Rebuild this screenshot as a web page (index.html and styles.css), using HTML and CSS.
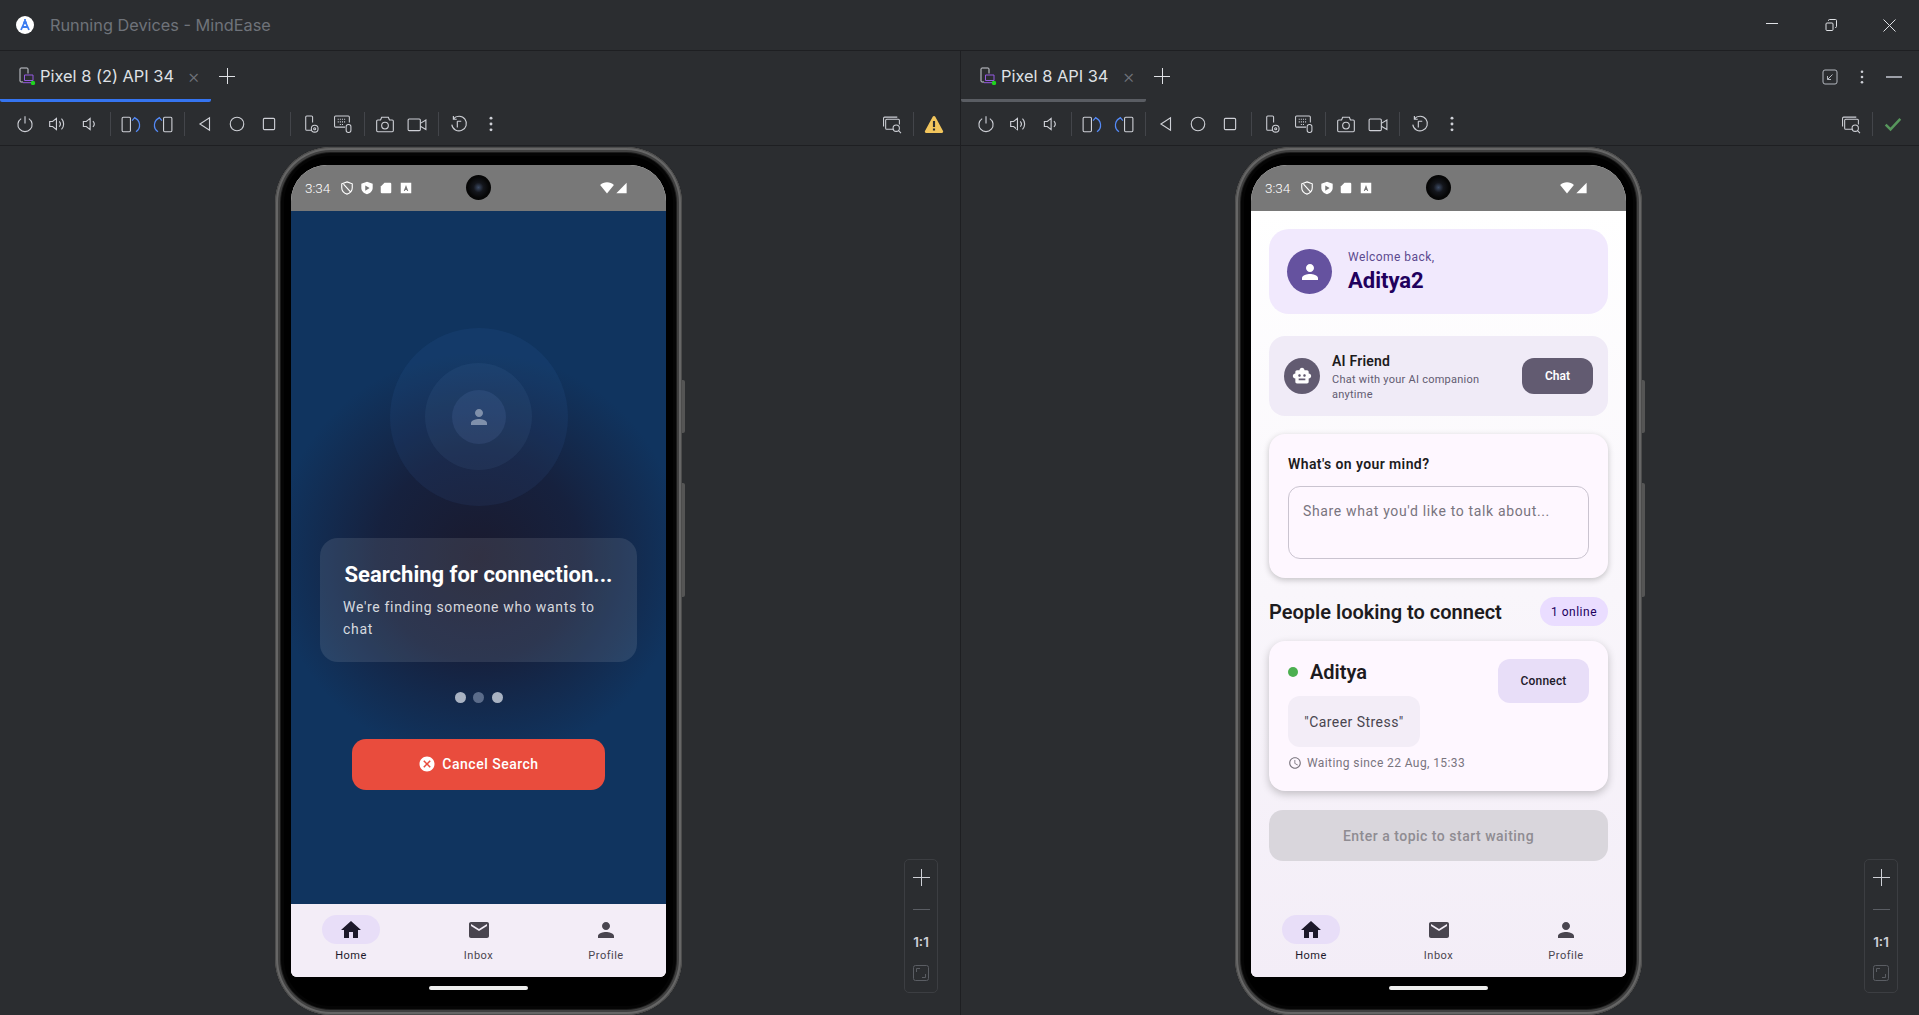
FILE: index.html
```html
<!DOCTYPE html>
<html lang="en">
<head>
    <meta charset="UTF-8" />
    <meta name="viewport" content="width=device-width, initial-scale=1" />
    <title>Running Devices - MindEase</title>
    <link rel="stylesheet" href="styles.css">
</head>
<body>

    <!-- Icon sprite -->
    <svg class="sprite" xmlns="http://www.w3.org/2000/svg">
        <symbol id="i-person" viewBox="0 0 24 24"><path d="M12 12c2.21 0 4-1.79 4-4s-1.79-4-4-4-4 1.79-4 4 1.79 4 4 4zm0 2c-2.67 0-8 1.34-8 4v2h16v-2c0-2.66-5.33-4-8-4z"/></symbol>
        <symbol id="i-home" viewBox="0 0 24 24"><path d="M10 20v-6h4v6h5v-8h3L12 3 2 12h3v8z"/></symbol>
        <symbol id="i-mail" viewBox="0 0 24 24"><path d="M20 4H4c-1.1 0-1.99.9-1.99 2L2 18c0 1.1.9 2 2 2h16c1.1 0 2-.9 2-2V6c0-1.1-.9-2-2-2zm0 4l-8 5-8-5V6l8 5 8-5v2z"/></symbol>
        <symbol id="i-cancel" viewBox="0 0 24 24"><path d="M12 2C6.47 2 2 6.47 2 12s4.47 10 10 10 10-4.47 10-10S17.53 2 12 2zm5 13.59L15.59 17 12 13.41 8.41 17 7 15.59 10.59 12 7 8.41 8.41 7 12 10.59 15.59 7 17 8.41 13.41 12 17 15.59z"/></symbol>
        <symbol id="i-clock" viewBox="0 0 24 24"><path d="M11.99 2C6.47 2 2 6.48 2 12s4.47 10 9.99 10C17.52 22 22 17.52 22 12S17.52 2 11.99 2zM12 20c-4.42 0-8-3.58-8-8s3.58-8 8-8 8 3.58 8 8-3.58 8-8 8zm.5-13H11v6l5.25 3.15.75-1.23-4.5-2.67z"/></symbol>
        <symbol id="i-robot" viewBox="0 0 24 24"><path d="M20 9V7c0-1.1-.9-2-2-2h-3c0-1.66-1.34-3-3-3S9 3.34 9 5H6c-1.1 0-2 .9-2 2v2c-1.66 0-3 1.34-3 3s1.34 3 3 3v4c0 1.1.9 2 2 2h12c1.1 0 2-.9 2-2v-4c1.66 0 3-1.34 3-3s-1.34-3-3-3zM7.5 11.5c0-.83.67-1.5 1.5-1.5s1.5.67 1.5 1.5S9.83 13 9 13s-1.5-.67-1.5-1.5zM16 17H8v-2h8v2zm-1-4c-.83 0-1.5-.67-1.5-1.5S14.17 10 15 10s1.5.67 1.5 1.5S15.83 13 15 13z"/></symbol>

        <symbol id="t-power" viewBox="0 0 16 16"><path d="M8 1v6.5M4.6 3.2a6.3 6.3 0 1 0 6.8 0"/></symbol>
        <symbol id="t-volup" viewBox="0 0 16 16"><path d="M1.5 5.8h2.6L7.5 3v10L4.1 10.2H1.5zM10 5.6a3.6 3.6 0 0 1 0 4.8M12 3.2a7 7 0 0 1 0 9.6"/></symbol>
        <symbol id="t-voldown" viewBox="0 0 16 16"><path d="M3 5.8h2.6L9 3v10l-3.4-2.8H3zM11.5 5.4a3.8 3.8 0 0 1 0 5.2"/></symbol>
        <symbol id="t-rotr" viewBox="0 0 18 16"><rect x="1" y="1.5" width="7.5" height="13" rx="1"/><path class="blue" d="M12 2a7 7 0 0 1 1.500 12.500M10 4.500L12.300 1.800l2.700 2"/></symbol>
        <symbol id="t-rotl" viewBox="0 0 18 16"><rect x="9.500" y="1.5" width="7.5" height="13" rx="1"/><path class="blue" d="M6 2a7 7 0 0 0-1.500 12.500M8 4.500L5.700 1.800 3 3.800"/></symbol>
        <symbol id="t-back" viewBox="0 0 16 16"><path d="M12 2.5v11L3.5 8z"/></symbol>
        <symbol id="t-circle" viewBox="0 0 16 16"><circle cx="8" cy="8" r="6"/></symbol>
        <symbol id="t-square" viewBox="0 0 16 16"><rect x="3" y="3" width="10" height="10" rx="1"/></symbol>
        <symbol id="t-devset" viewBox="0 0 18 18"><path d="M9.500 14.500H5a1 1 0 0 1-1-1V2a1 1 0 0 1 1-1h4.500a1 1 0 0 1 1 1v5"/><circle cx="12.500" cy="13" r="3.200"/><circle cx="12.500" cy="13" r="1"/></symbol>
        <symbol id="t-keys" viewBox="0 0 18 18"><path d="M11 11.500H2a1 1 0 0 1-1-1V2a1 1 0 0 1 1-1h12a1 1 0 0 1 1 1v5"/><path d="M4 4h8M4 6.500h8M6 9h4" stroke-dasharray="1 1"/><rect x="12" y="9" width="4.500" height="7.500" rx="2"/></symbol>
        <symbol id="t-camera" viewBox="0 0 18 16"><path d="M2.500 4H5l1-2.500h6L13 4h2.500a1 1 0 0 1 1 1v8.500a1 1 0 0 1-1 1h-13a1 1 0 0 1-1-1V5a1 1 0 0 1 1-1z"/><circle cx="9" cy="9" r="3"/></symbol>
        <symbol id="t-video" viewBox="0 0 18 16"><rect x="1" y="3" width="11" height="10.500" rx="1"/><path d="M12 7l5-3v8.500l-5-3"/></symbol>
        <symbol id="t-revert" viewBox="0 0 16 16"><path d="M3 3.500a6.500 6.500 0 1 1-1.400 5M3 .8v3h3M6.500 5.500H10M6.500 5.500V11"/></symbol>
        <symbol id="t-more" viewBox="0 0 16 16"><circle class="solid" cx="8" cy="2.800" r="1.300"/><circle class="solid" cx="8" cy="8" r="1.300"/><circle class="solid" cx="8" cy="13.200" r="1.300"/></symbol>
        <symbol id="t-find" viewBox="0 0 18 18"><path d="M1 11V3a1 1 0 0 1 1-1h12"/><path d="M11 13.500H4a1 1 0 0 1-1-1V5a1 1 0 0 1 1-1h11a1 1 0 0 1 1 1v4"/><circle cx="13" cy="12.500" r="3"/><path d="M15.200 14.800l2.300 2.300"/></symbol>
        <symbol id="t-warn" viewBox="0 0 16 16"><path class="amber" d="M8 .8c.5 0 .9.3 1.100.7l6.500 12c.4.8-.1 1.700-1 1.700H1.400c-.9 0-1.400-.9-1-1.700l6.500-12C7.100 1.100 7.500.8 8 .8z"/><path class="dark" d="M7.100 5h1.800v5.200H7.100zM7.100 11.300h1.800v1.800H7.100z"/></symbol>
        <symbol id="t-check" viewBox="0 0 16 16"><path class="green" d="M1.500 8.500l4.300 4.300L14.500 3.500"/></symbol>
        <symbol id="t-device" viewBox="0 0 18 18"><path d="M5 15H3a1 1 0 0 1-1-1V2a1 1 0 0 1 1-1h6a1 1 0 0 1 1 1v4.500"/><path class="purple" d="M6.500 8h8.500v5.500H6.500zM5 15.700h9"/><circle class="lime" cx="15" cy="16" r="2.200"/></symbol>
        <symbol id="t-collapse" viewBox="0 0 16 16"><rect x="1" y="1" width="14" height="14" rx="2"/><path d="M10.500 5.500l-5 5M5.500 7v3.500H9"/></symbol>

        <symbol id="s-block" viewBox="0 0 16 16"><path d="M8 1l6 2.200v4.600c0 3.400-2.500 6.200-6 7.200-3.500-1-6-3.800-6-7.200V3.200zM4 3.500l8 9"/></symbol>
        <symbol id="s-play" viewBox="0 0 16 16"><path d="M8 .8l6.500 2.400v4.600c0 3.600-2.700 6.500-6.500 7.400-3.800-.9-6.500-3.800-6.500-7.400V3.200zM6 5v6l5-3z" fill-rule="evenodd"/></symbol>
        <symbol id="s-sd" viewBox="0 0 16 16"><path d="M6 1h7.500A1.500 1.500 0 0 1 15 2.500v11a1.500 1.500 0 0 1-1.500 1.500h-11A1.500 1.500 0 0 1 1 13.500V6z"/></symbol>
        <symbol id="s-app" viewBox="0 0 16 16"><path d="M1 1h14v14H1zM8 4L5 12h1.500l.5-1.500h2l.5 1.500H11z" fill-rule="evenodd"/></symbol>
        <symbol id="s-wifi" viewBox="0 0 16 14"><path d="M8 13.500L0 3.500C2 1.500 5 .3 8 .3s6 1.200 8 3.200z"/></symbol>
        <symbol id="s-signal" viewBox="0 0 14 14"><path d="M13 1v12H1z"/></symbol>
    </svg>

    <div class="ide">

        <header class="titlebar">
            <svg class="logo" viewBox="0 0 18 18" width="18" height="18">
                <circle cx="9" cy="9" r="9" fill="#fff"/>
                <path d="M9 3v2M9 5L5 14M9 5l4 9M6.500 11h5" stroke="#3d7df0" stroke-width="1.800" fill="none"/>
                <circle cx="9" cy="6.500" r="1.800" fill="#3d7df0"/>
            </svg>
            <span class="window-title">Running Devices - MindEase</span>
            <div class="window-buttons">
                <span class="win-btn"><span class="win-min"></span></span>
                <span class="win-btn"><svg viewBox="0 0 12 12" width="12" height="12"><path d="M1 5a1 1 0 0 1 1-1h5a1 1 0 0 1 1 1v5.500a1 1 0 0 1-1 1H2a1 1 0 0 1-1-1zM3.500 2v-.5a1 1 0 0 1 1-1h6a1 1 0 0 1 1 1v6a1 1 0 0 1-1 1H10" fill="none" stroke="#dfe1e5"/></svg></span>
                <span class="win-btn"><svg viewBox="0 0 13 13" width="13" height="13"><path d="M.5.500l12 12M12.500.500l-12 12" fill="none" stroke="#dfe1e5"/></svg></span>
            </div>
        </header>

        <div class="panes">

            <!-- Emulador izquierdo -->
            <section class="pane pane-left">
                <div class="tabs">
                    <div class="tab tab-active">
                        <svg class="tab-icon"><use href="#t-device"/></svg>
                        <span class="tab-name">Pixel 8 (2) API 34</span>
                        <span class="tab-close">×</span>
                    </div>
                    <span class="tab-add"></span>
                </div>
                <div class="toolbar">
                    <span class="tool"><svg><use href="#t-power"/></svg></span>
                    <span class="tool"><svg><use href="#t-volup"/></svg></span>
                    <span class="tool"><svg><use href="#t-voldown"/></svg></span>
                    <span class="sep"></span>
                    <span class="tool"><svg class="wide"><use href="#t-rotr"/></svg></span>
                    <span class="tool"><svg class="wide"><use href="#t-rotl"/></svg></span>
                    <span class="sep"></span>
                    <span class="tool"><svg><use href="#t-back"/></svg></span>
                    <span class="tool"><svg><use href="#t-circle"/></svg></span>
                    <span class="tool"><svg><use href="#t-square"/></svg></span>
                    <span class="sep"></span>
                    <span class="tool"><svg class="wide"><use href="#t-devset"/></svg></span>
                    <span class="tool"><svg class="wide"><use href="#t-keys"/></svg></span>
                    <span class="sep"></span>
                    <span class="tool"><svg class="wide"><use href="#t-camera"/></svg></span>
                    <span class="tool"><svg class="wide"><use href="#t-video"/></svg></span>
                    <span class="sep"></span>
                    <span class="tool"><svg><use href="#t-revert"/></svg></span>
                    <span class="tool"><svg><use href="#t-more"/></svg></span>
                    <span class="tool tool-end"><svg class="wide"><use href="#t-find"/></svg></span>
                    <span class="sep"></span>
                    <span class="tool"><svg class="wide"><use href="#t-warn"/></svg></span>
                </div>
                <div class="stage">
                    <div class="phone">
                        <span class="side-btn side-power"></span>
                        <span class="side-btn side-volume"></span>
                        <div class="screen">
                            <div class="status">
                                <span class="clock">3:34</span>
                                <svg class="st st-line"><use href="#s-block"/></svg>
                                <svg class="st"><use href="#s-play"/></svg>
                                <svg class="st st-sm"><use href="#s-sd"/></svg>
                                <svg class="st st-sm"><use href="#s-app"/></svg>
                                <span class="camera"></span>
                                <svg class="st-wifi"><use href="#s-wifi"/></svg>
                                <svg class="st-signal"><use href="#s-signal"/></svg>
                            </div>
                            <main class="search">
                                <div class="ring ring-outer">
                                    <div class="ring ring-mid">
                                        <div class="ring ring-inner">
                                            <svg class="ring-icon"><use href="#i-person"/></svg>
                                        </div>
                                    </div>
                                </div>
                                <div class="search-card">
                                    <h2>Searching for connection...</h2>
                                    <p>We're finding someone who wants to chat</p>
                                </div>
                                <div class="dots">
                                    <span class="dot"></span>
                                    <span class="dot dot-dim"></span>
                                    <span class="dot"></span>
                                </div>
                                <div class="cancel-btn">
                                    <svg><use href="#i-cancel"/></svg>
                                    <span>Cancel Search</span>
                                </div>
                            </main>
                            <nav class="bottom-nav">
                                <div class="nav-item nav-active">
                                    <span class="nav-pill"><svg><use href="#i-home"/></svg></span>
                                    <span class="nav-label">Home</span>
                                </div>
                                <div class="nav-item">
                                    <span class="nav-pill"><svg><use href="#i-mail"/></svg></span>
                                    <span class="nav-label">Inbox</span>
                                </div>
                                <div class="nav-item">
                                    <span class="nav-pill"><svg><use href="#i-person"/></svg></span>
                                    <span class="nav-label">Profile</span>
                                </div>
                            </nav>
                        </div>
                        <span class="home-bar"></span>
                    </div>
                    <div class="zoom-box">
                        <span class="zoom-plus"></span>
                        <span class="zoom-minus"></span>
                        <span class="zoom-one">1:1</span>
                        <svg class="zoom-fit" viewBox="0 0 16 16"><rect x=".5" y=".5" width="15" height="15" rx="2"/><path d="M7 3.500H3.500V7M9 12.500h3.500V9"/></svg>
                    </div>
                </div>
            </section>

            <!-- Emulador derecho -->
            <section class="pane pane-right">
                <div class="tabs">
                    <div class="tab tab-idle">
                        <svg class="tab-icon"><use href="#t-device"/></svg>
                        <span class="tab-name">Pixel 8 API 34</span>
                        <span class="tab-close">×</span>
                    </div>
                    <span class="tab-add"></span>
                    <div class="tabs-end">
                        <svg><use href="#t-collapse"/></svg>
                        <svg><use href="#t-more"/></svg>
                        <span class="pane-min"></span>
                    </div>
                </div>
                <div class="toolbar">
                    <span class="tool"><svg><use href="#t-power"/></svg></span>
                    <span class="tool"><svg><use href="#t-volup"/></svg></span>
                    <span class="tool"><svg><use href="#t-voldown"/></svg></span>
                    <span class="sep"></span>
                    <span class="tool"><svg class="wide"><use href="#t-rotr"/></svg></span>
                    <span class="tool"><svg class="wide"><use href="#t-rotl"/></svg></span>
                    <span class="sep"></span>
                    <span class="tool"><svg><use href="#t-back"/></svg></span>
                    <span class="tool"><svg><use href="#t-circle"/></svg></span>
                    <span class="tool"><svg><use href="#t-square"/></svg></span>
                    <span class="sep"></span>
                    <span class="tool"><svg class="wide"><use href="#t-devset"/></svg></span>
                    <span class="tool"><svg class="wide"><use href="#t-keys"/></svg></span>
                    <span class="sep"></span>
                    <span class="tool"><svg class="wide"><use href="#t-camera"/></svg></span>
                    <span class="tool"><svg class="wide"><use href="#t-video"/></svg></span>
                    <span class="sep"></span>
                    <span class="tool"><svg><use href="#t-revert"/></svg></span>
                    <span class="tool"><svg><use href="#t-more"/></svg></span>
                    <span class="tool tool-end"><svg class="wide"><use href="#t-find"/></svg></span>
                    <span class="sep"></span>
                    <span class="tool"><svg><use href="#t-check"/></svg></span>
                </div>
                <div class="stage">
                    <div class="phone">
                        <span class="side-btn side-power"></span>
                        <span class="side-btn side-volume"></span>
                        <div class="screen">
                            <div class="status">
                                <span class="clock">3:34</span>
                                <svg class="st st-line"><use href="#s-block"/></svg>
                                <svg class="st"><use href="#s-play"/></svg>
                                <svg class="st st-sm"><use href="#s-sd"/></svg>
                                <svg class="st st-sm"><use href="#s-app"/></svg>
                                <span class="camera"></span>
                                <svg class="st-wifi"><use href="#s-wifi"/></svg>
                                <svg class="st-signal"><use href="#s-signal"/></svg>
                            </div>
                            <div class="app">
                                <main class="home">
                                    <div class="welcome">
                                        <span class="avatar"><svg><use href="#i-person"/></svg></span>
                                        <div>
                                            <div class="welcome-small">Welcome back,</div>
                                            <div class="welcome-name">Aditya2</div>
                                        </div>
                                    </div>
                                    <div class="ai-card">
                                        <span class="ai-icon"><svg><use href="#i-robot"/></svg></span>
                                        <div class="ai-text">
                                            <div class="ai-title">AI Friend</div>
                                            <div class="ai-sub">Chat with your AI companion anytime</div>
                                        </div>
                                        <span class="chat-btn">Chat</span>
                                    </div>
                                    <div class="topic-card">
                                        <div class="topic-title">What's on your mind?</div>
                                        <div class="topic-input">Share what you'd like to talk about...</div>
                                    </div>
                                    <div class="people-head">
                                        <h3>People looking to connect</h3>
                                        <span class="chip">1 online</span>
                                    </div>
                                    <div class="user-card">
                                        <div class="user-top">
                                            <div>
                                                <div class="user-name"><span class="online-dot"></span>Aditya</div>
                                                <div class="user-topic">"Career Stress"</div>
                                            </div>
                                            <span class="connect-btn">Connect</span>
                                        </div>
                                        <div class="user-wait">
                                            <svg><use href="#i-clock"/></svg>
                                            <span>Waiting since 22 Aug, 15:33</span>
                                        </div>
                                    </div>
                                    <div class="start-btn">Enter a topic to start waiting</div>
                                </main>
                                <nav class="bottom-nav bottom-nav-clear">
                                    <div class="nav-item nav-active">
                                        <span class="nav-pill"><svg><use href="#i-home"/></svg></span>
                                        <span class="nav-label">Home</span>
                                    </div>
                                    <div class="nav-item">
                                        <span class="nav-pill"><svg><use href="#i-mail"/></svg></span>
                                        <span class="nav-label">Inbox</span>
                                    </div>
                                    <div class="nav-item">
                                        <span class="nav-pill"><svg><use href="#i-person"/></svg></span>
                                        <span class="nav-label">Profile</span>
                                    </div>
                                </nav>
                            </div>
                        </div>
                        <span class="home-bar"></span>
                    </div>
                    <div class="zoom-box">
                        <span class="zoom-plus"></span>
                        <span class="zoom-minus"></span>
                        <span class="zoom-one">1:1</span>
                        <svg class="zoom-fit" viewBox="0 0 16 16"><rect x=".5" y=".5" width="15" height="15" rx="2"/><path d="M7 3.500H3.500V7M9 12.500h3.500V9"/></svg>
                    </div>
                </div>
            </section>

        </div>
    </div>

</body>
</html>
```

FILE: styles.css
```css
* {
    box-sizing: border-box;
}
body {
    margin: 0;
    background-color: #2b2d30;
    font-family: Inter, 'Noto Sans', sans-serif;
    overflow: hidden;
}
.sprite {
    display: none;
}
.ide {
    width: 1919px;
    height: 1015px;
    display: flex;
    flex-direction: column;
    overflow: hidden;
}

/* Barra de titulo */
.titlebar {
    height: 51px;
    flex: none;
    display: flex;
    align-items: center;
    padding-left: 16px;
    border-bottom: 1px solid #1e1f22;
}
.window-title {
    margin-left: 16px;
    font-size: 16.3px;
    color: #6f737a;
}
.window-buttons {
    margin-left: auto;
    display: flex;
    align-items: center;
}
.win-btn {
    width: 59px;
    height: 50px;
    display: flex;
    align-items: center;
    justify-content: center;
}
.win-min {
    width: 12px;
    height: 1px;
    margin-top: -4px;
    background: #dfe1e5;
}

.panes {
    flex: 1;
    display: flex;
    min-height: 0;
}
.pane {
    display: flex;
    flex-direction: column;
    min-width: 0;
}
.pane-left {
    width: 961px;
    border-right: 1px solid #1e1f22;
}
.pane-right {
    flex: 1;
}

/* Pestañas */
.tabs {
    height: 51px;
    flex: none;
    display: flex;
    align-items: flex-start;
}
.tab {
    height: 51px;
    display: flex;
    align-items: center;
    padding-top: 2px;
    border-bottom: 3px solid transparent;
    border-radius: 0 0 2px 2px;
}
.tab-active {
    width: 211px;
    padding-left: 18px;
    border-bottom-color: #3574f0;
}
.tab-idle {
    width: 185px;
    padding-left: 18px;
    border-bottom-color: #5a5d63;
}
.tab-icon {
    width: 18px;
    height: 18px;
    fill: none;
    stroke: #ced0d6;
    stroke-width: 1;
}
.tab-name {
    margin-left: 4px;
    font-size: 16.4px;
    color: #dfe1e5;
}
.tab-close {
    margin-left: auto;
    margin-right: 11px;
    font-size: 19px;
    font-weight: 300;
    color: #6f737a;
}
.tab-add {
    width: 16px;
    height: 16px;
    margin: 17px 0 0 8px;
    background:
        linear-gradient(#dfe1e5, #dfe1e5) center / 16px 1px no-repeat,
        linear-gradient(#dfe1e5, #dfe1e5) center / 1px 16px no-repeat;
}
.tabs-end {
    margin-left: auto;
    height: 50px;
    padding: 1px 17px 0 0;
    display: flex;
    align-items: center;
}
.tabs-end svg {
    width: 16px;
    height: 16px;
    margin-right: 16px;
    fill: none;
    stroke: #b4b8bf;
    stroke-width: 1;
}
.pane-min {
    width: 16px;
    height: 2px;
    background: #9da0a8;
}

/* Barra de herramientas */
.toolbar {
    height: 44px;
    flex: none;
    display: flex;
    align-items: center;
    padding: 1px 10px 0 9px;
    border-bottom: 1px solid #1e1f22;
}
.tool {
    width: 32px;
    height: 32px;
    flex: none;
    display: flex;
    align-items: center;
    justify-content: center;
}
.tool svg {
    width: 18px;
    height: 18px;
    fill: none;
    stroke: #ced0d6;
    stroke-width: 1;
}
.tool svg.wide {
    width: 20px;
    height: 19px;
}
.tool-end {
    margin-left: auto;
}
.sep {
    width: 1px;
    height: 24px;
    flex: none;
    margin: 0 4.5px;
    background: #43454a;
}
.blue {
    stroke: #548af7;
    stroke-width: 1.1;
}
.solid {
    fill: #ced0d6;
    stroke: none;
}
.amber {
    fill: #f2c55c;
    stroke: none;
}
.dark {
    fill: #2b2d30;
    stroke: none;
}
.green {
    stroke: #57965c;
    stroke-width: 2.2;
}
.purple {
    stroke: #955ae0;
}
.lime {
    fill: #1fd41f;
    stroke: none;
}

/* Zona del dispositivo */
.stage {
    flex: 1;
    position: relative;
    display: flex;
    justify-content: center;
    align-items: flex-start;
    padding: 1px 3px 0 0;
    min-height: 0;
}
.phone {
    position: relative;
    width: 407px;
    height: 868px;
    flex: none;
    padding: 18px 16px 38px;
    background: #000;
    border-radius: 56px;
    box-shadow:
        inset 0 0 0 1px #4c4c4c,
        inset 0 0 0 3px #666,
        inset 0 0 0 5px #404040,
        inset 0 0 0 6px #1c1c1c,
        inset 0 0 0 9px #050505;
}
.side-btn {
    position: absolute;
    right: -3px;
    width: 3px;
    background: #555;
    border-radius: 0 2px 2px 0;
}
.side-power {
    top: 233px;
    height: 53px;
}
.side-volume {
    top: 336px;
    height: 114px;
}
.home-bar {
    position: absolute;
    left: 154px;
    top: 839px;
    width: 99px;
    height: 4px;
    border-radius: 2px;
    background: #eee;
}
.screen {
    height: 100%;
    display: flex;
    flex-direction: column;
    overflow: hidden;
    border-radius: 36px 36px 6px 6px;
    font-family: Roboto, sans-serif;
    background: #fff;
}

/* Barra de estado */
.status {
    position: relative;
    height: 46px;
    flex: none;
    display: flex;
    align-items: center;
    padding-left: 14px;
    background: #787878;
    color: #fff;
}
.clock {
    width: 34px;
    margin-right: 1px;
    font-size: 13.5px;
    font-weight: 300;
}
.st {
    width: 14px;
    height: 14px;
    margin-right: 6px;
    fill: #fff;
}
.st-line {
    fill: none;
    stroke: #fff;
    stroke-width: 1.3;
}
.st-sm {
    width: 12px;
    height: 12px;
    margin: 0 8px 0 0;
}
.camera {
    position: absolute;
    left: 175px;
    top: 10px;
    width: 25px;
    height: 25px;
    border-radius: 50%;
    background: radial-gradient(circle at 50% 50%, #3c4a63 0, #14161c 28%, #060606 60%);
}
.st-wifi {
    position: absolute;
    left: 309px;
    top: 17px;
    width: 14px;
    height: 12px;
    fill: #fff;
}
.st-signal {
    position: absolute;
    left: 324px;
    top: 17px;
    width: 13px;
    height: 12px;
    fill: #fff;
}

/* Pantalla de busqueda */
.search {
    flex: 1;
    min-height: 0;
    padding-top: 2px;
    display: flex;
    flex-direction: column;
    align-items: center;
    justify-content: center;
    background: radial-gradient(circle 205px at 50% 50%, #1a1a2e 0, #16213e 50%, #10345f 100%);
    background-color: #10345f;
}
.ring {
    border-radius: 50%;
    display: flex;
    align-items: center;
    justify-content: center;
    background: rgba(120, 160, 220, 0.08);
}
.ring-outer {
    width: 178px;
    height: 178px;
    background: rgba(74, 144, 226, 0.08);
}
.ring-mid {
    width: 107px;
    height: 107px;
}
.ring-inner {
    width: 54px;
    height: 54px;
    background: rgba(120, 160, 220, 0.12);
}
.ring-icon {
    width: 24px;
    height: 24px;
    fill: #7f90ab;
}
.search-card {
    width: 317px;
    height: 124px;
    margin-top: 32px;
    padding: 22px 23px 0;
    border-radius: 18px;
    background: rgba(255, 255, 255, 0.1);
    color: #fff;
}
.search-card h2 {
    margin: 0 0 6px;
    text-align: center;
    font-size: 22px;
    line-height: 30px;
    font-weight: 700;
}
.search-card p {
    margin: 0;
    font-size: 14px;
    line-height: 22px;
    letter-spacing: 0.68px;
    color: rgba(255, 255, 255, 0.82);
}
.dots {
    display: flex;
    gap: 7.5px;
    margin-top: 30px;
}
.dot {
    width: 11px;
    height: 11px;
    border-radius: 50%;
    background: #a9b3c3;
}
.dot-dim {
    background: #5b6c8a;
}
.cancel-btn {
    width: 253px;
    height: 51px;
    margin-top: 36px;
    display: flex;
    align-items: center;
    justify-content: center;
    gap: 6px;
    border-radius: 14px;
    background: #e94c3d;
    color: #fff;
    font-size: 14px;
    font-weight: 500;
    letter-spacing: 0.5px;
}
.cancel-btn svg {
    width: 18px;
    height: 18px;
    fill: #fff;
}

/* Navegacion inferior */
.bottom-nav {
    height: 73px;
    flex: none;
    display: flex;
    justify-content: center;
    background: #f3edf7;
    padding-top: 11px;
}
.bottom-nav-clear {
    background: transparent;
}
.nav-item {
    width: 127.5px;
    flex: none;
    display: flex;
    flex-direction: column;
    align-items: center;
}
.nav-pill {
    width: 58px;
    height: 29px;
    display: flex;
    align-items: center;
    justify-content: center;
    border-radius: 15px;
}
.nav-pill svg {
    width: 24px;
    height: 24px;
    fill: #49454f;
}
.nav-active .nav-pill {
    background: #e8def8;
}
.nav-active .nav-pill svg {
    fill: #1d192b;
}
.nav-label {
    margin-top: 4px;
    font-size: 11px;
    line-height: 16px;
    font-weight: 400;
    letter-spacing: 0.5px;
    color: #49454f;
}
.nav-active .nav-label {
    color: #1d192b;
}

/* Pantalla principal */
.app {
    flex: 1;
    min-height: 0;
    display: flex;
    flex-direction: column;
    background: linear-gradient(#ffffff, #f3edf7);
}
.home {
    flex: 1;
    min-height: 0;
    padding: 18px 18px 0;
}
.welcome {
    height: 85px;
    display: flex;
    align-items: center;
    gap: 16px;
    padding-left: 18px;
    border-radius: 20px;
    background: #f1e9fd;
}
.avatar {
    width: 45px;
    height: 45px;
    flex: none;
    display: flex;
    align-items: center;
    justify-content: center;
    border-radius: 50%;
    background: #65529f;
}
.avatar svg {
    width: 24px;
    height: 24px;
    fill: #fff;
}
.welcome-small {
    font-size: 12px;
    line-height: 16px;
    letter-spacing: 0.45px;
    color: #5c4a8f;
}
.welcome-name {
    margin-top: 2px;
    font-size: 22px;
    line-height: 28px;
    font-weight: 700;
    color: #21005d;
}
.ai-card {
    height: 80px;
    margin-top: 22px;
    display: flex;
    align-items: center;
    padding: 0 15px;
    border-radius: 16px;
    background: #f0ebf7;
}
.ai-icon {
    width: 36px;
    height: 36px;
    flex: none;
    display: flex;
    align-items: center;
    justify-content: center;
    border-radius: 50%;
    background: #625b71;
}
.ai-icon svg {
    width: 20px;
    height: 20px;
    fill: #fff;
}
.ai-text {
    width: 160px;
    margin-left: 12px;
    padding-top: 2px;
}
.ai-title {
    font-size: 14px;
    line-height: 18px;
    font-weight: 600;
    letter-spacing: 0.2px;
    color: #1d1b20;
}
.ai-sub {
    margin-top: 2px;
    font-size: 11px;
    line-height: 15px;
    letter-spacing: 0.25px;
    color: #625b71;
}
.chat-btn {
    width: 71px;
    height: 36px;
    margin-left: auto;
    display: flex;
    align-items: center;
    justify-content: center;
    border-radius: 12px;
    background: #625b71;
    color: #fff;
    font-size: 12px;
    font-weight: 600;
}
.topic-card {
    height: 144px;
    margin-top: 18px;
    padding: 20px 19px;
    border-radius: 16px;
    background: #fef7ff;
    box-shadow: 0 2px 6px rgba(0, 0, 0, 0.22);
}
.topic-title {
    font-size: 14px;
    line-height: 20px;
    font-weight: 600;
    letter-spacing: 0.4px;
    color: #1d1b20;
}
.topic-input {
    height: 73px;
    margin-top: 12px;
    padding: 14px;
    border: 1px solid #cac4d0;
    border-radius: 12px;
    font-size: 14px;
    line-height: 20px;
    letter-spacing: 0.65px;
    color: #79747e;
}
.people-head {
    height: 29px;
    margin-top: 19px;
    display: flex;
    align-items: center;
    justify-content: space-between;
}
.people-head h3 {
    margin: 0;
    font-size: 20px;
    line-height: 26px;
    font-weight: 600;
    color: #1d1b20;
}
.chip {
    width: 68px;
    height: 29px;
    display: flex;
    align-items: center;
    justify-content: center;
    border-radius: 15px;
    background: #eaddff;
    color: #21005d;
    font-size: 12px;
    font-weight: 400;
    letter-spacing: 0.5px;
}
.user-card {
    height: 150px;
    margin-top: 15px;
    padding: 18px 19px;
    border-radius: 16px;
    background: #fef7ff;
    box-shadow: 0 3px 8px rgba(0, 0, 0, 0.22);
}
.user-top {
    display: flex;
    justify-content: space-between;
    align-items: flex-start;
}
.user-name {
    height: 26px;
    display: flex;
    align-items: center;
    font-size: 20px;
    font-weight: 600;
    color: #1d1b20;
}
.online-dot {
    width: 10px;
    height: 10px;
    margin-right: 12px;
    border-radius: 50%;
    background: #4caf50;
}
.user-topic {
    width: 132px;
    height: 51px;
    margin-top: 11px;
    display: flex;
    align-items: center;
    justify-content: center;
    border-radius: 12px;
    background: #f3edf7;
    font-size: 14px;
    letter-spacing: 0.45px;
    color: #49454f;
}
.connect-btn {
    width: 91px;
    height: 44px;
    display: flex;
    align-items: center;
    justify-content: center;
    border-radius: 12px;
    background: #e8def8;
    color: #1d192b;
    font-size: 12px;
    font-weight: 500;
    letter-spacing: 0.2px;
}
.user-wait {
    margin-top: 9px;
    display: flex;
    align-items: center;
    gap: 5px;
    font-size: 12px;
    letter-spacing: 0.4px;
    color: #79747e;
}
.user-wait svg {
    width: 14px;
    height: 14px;
    fill: #79747e;
}
.start-btn {
    height: 51px;
    margin-top: 19px;
    display: flex;
    align-items: center;
    justify-content: center;
    border-radius: 14px;
    background: #d9d6dc;
    color: #8f8c92;
    font-size: 14px;
    font-weight: 500;
    letter-spacing: 0.5px;
}

/* Control de zoom */
.zoom-box {
    position: absolute;
    right: 21px;
    top: 713px;
    width: 34px;
    height: 134px;
    display: flex;
    flex-direction: column;
    align-items: center;
    border: 1px solid #3c3e42;
    border-radius: 5px;
    background: #2b2d30;
}
.pane-left .zoom-box {
    right: 22px;
}
.zoom-plus {
    width: 17px;
    height: 17px;
    margin-top: 9px;
    background:
        linear-gradient(#ced0d6, #ced0d6) center / 17px 1px no-repeat,
        linear-gradient(#ced0d6, #ced0d6) center / 1px 17px no-repeat;
}
.zoom-minus {
    width: 17px;
    height: 1px;
    margin-top: 23px;
    background: #5a5d63;
}
.zoom-one {
    margin-top: 24px;
    font-size: 13.5px;
    line-height: 17px;
    font-weight: 600;
    color: #ced0d6;
}
.zoom-fit {
    width: 16px;
    height: 16px;
    margin-top: 14px;
    fill: none;
    stroke: #5a5d63;
}
```
